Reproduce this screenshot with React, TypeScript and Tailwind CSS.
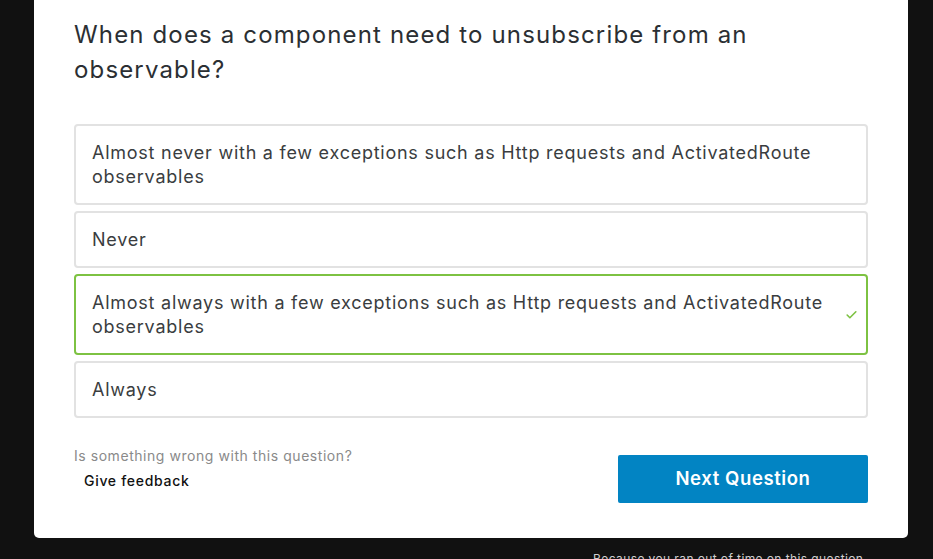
import { Check } from 'lucide-react'

const options = [
  { id: 'a', text: 'Almost never with a few exceptions such as Http requests and ActivatedRoute observables' },
  { id: 'b', text: 'Never' },
  { id: 'c', text: 'Almost always with a few exceptions such as Http requests and ActivatedRoute observables', correct: true },
  { id: 'd', text: 'Always' },
]

export default function App() {
  return (
    <div className="min-h-[559px] w-full bg-[#111111] overflow-hidden" style={{ fontFamily: 'Inter, "Open Sans", sans-serif' }}>
      <div className="ml-[34px] w-[874px] bg-white rounded-b-[5px] pl-[40px] pr-[40px] pt-[17px] pb-[35px]">
        <h1 className="text-[24px] leading-[35px] text-[#2b2f33] font-normal tracking-[1.15px] pr-[20px]">
          When does a component need to unsubscribe from an observable?
        </h1>

        <div className="mt-[37px] flex flex-col gap-[6px]">
          {options.map(opt => (
            <div key={opt.id}
              className={
                opt.correct
                  ? 'relative border-2 border-[#7dc242] rounded-[4px] pl-[16px] pr-[36px] py-[14.5px]'
                  : 'relative border-2 border-[#e2e2e2] rounded-[4px] pl-[16px] pr-[36px] py-[14.5px]'
              }>
              <p className="text-[18px] leading-[24px] text-[#3a3d40] tracking-[0.75px]">{opt.text}</p>
              {opt.correct && (
                <Check size={13} strokeWidth={3} className="absolute right-[8px] top-1/2 -translate-y-1/2 text-[#7dc242]" />
              )}
            </div>
          ))}
        </div>

        <div className="mt-[29px] flex items-start justify-between">
          <div>
            <p className="text-[14px] leading-[18px] text-[#8a8a8a] tracking-[0.55px]">Is something wrong with this question?</p>
            <button className="mt-[7px] ml-[10px] text-[14px] leading-[18px] font-medium text-[#111] tracking-[0.7px]">Give feedback</button>
          </div>
          <button className="mt-[8px] w-[250px] h-[48px] rounded-[2px] bg-[#0284c3] text-white text-[18.5px] font-semibold tracking-[0.6px]">
            Next Question
          </button>
        </div>
      </div>
      <p className="ml-[593px] mt-[13px] text-[12px] leading-[16px] text-[#cfcfcf] tracking-[0.4px]">
        Because you ran out of time on this question
      </p>
    </div>
  )
}
